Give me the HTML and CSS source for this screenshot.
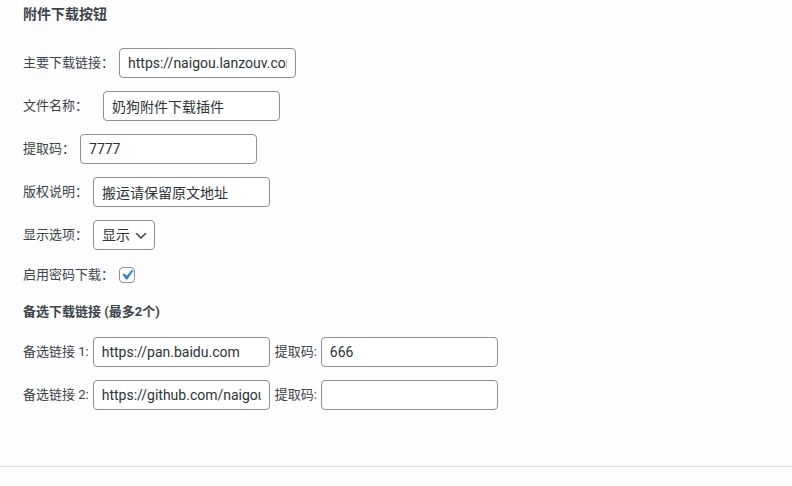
FILE: index.html
```html
<!DOCTYPE html>
<html lang="zh-CN">
<head>
<meta charset="utf-8">
<title>附件下载按钮</title>
<link rel="stylesheet" href="styles.css">
</head>
<body>
<div class="wrap">
  <h3 class="title">附件下载按钮</h3>
  <div class="form">
    <div class="row"><label>主要下载链接：</label><input class="text" type="text" value="https://naigou.lanzouv.com/"></div>
    <div class="row row-wide"><label>文件名称：</label><input class="text" type="text" value="奶狗附件下载插件"></div>
    <div class="row"><label>提取码：</label><input class="text" type="text" value="7777"></div>
    <div class="row"><label>版权说明：</label><input class="text" type="text" value="搬运请保留原文地址"></div>
    <div class="row"><label>显示选项：</label><select class="select"><option>显示</option><option>隐藏</option></select></div>
    <div class="row row-check"><label>启用密码下载：</label><input class="check" type="checkbox" checked></div>
    <h4 class="subtitle">备选下载链接 (最多2个)</h4>
    <div class="row row-alt"><label>备选链接 1:</label><input class="text" type="text" value="https://pan.baidu.com"><label class="code-label">提取码:</label><input class="text" type="text" value="666"></div>
    <div class="row row-alt"><label>备选链接 2:</label><input class="text" type="text" value="https://github.com/naigou"><label class="code-label">提取码:</label><input class="text" type="text" value=""></div>
  </div>
</div>
<div class="footer-line"></div>
</body>
</html>
```

FILE: styles.css
```css
html, body {
  margin: 0;
  padding: 0;
  background: #fdfdfd;
}
body {
  font-family: "Segoe UI", Roboto, "Noto Sans CJK SC", sans-serif;
  color: #3c434a;
  font-size: 13px;
}
.wrap {
  padding: 4px 0 0 23px;
}
.title {
  margin: 0 0 24px;
  font-size: 14px;
  line-height: 20px;
  font-weight: 700;
  color: #3c434a;
}
.form {
  display: flex;
  flex-direction: column;
  gap: 13px;
}
.row {
  display: flex;
  align-items: center;
  gap: 5px;
  height: 30px;
}
.row label {
  font-size: 13px;
  line-height: 20px;
  white-space: nowrap;
}
.row-wide {
  gap: 15px;
}
.row-alt {
  gap: 4px;
}
.row-check {
  height: 22px;
  padding-top: 1px;
}
.code-label {
  margin-left: 1px;
}
.text {
  box-sizing: border-box;
  width: 177px;
  height: 30px;
  margin: 0;
  padding: 0 8px;
  border: 1px solid #8c8f94;
  border-radius: 4px;
  background: #fff;
  color: #2c3338;
  font-family: "Segoe UI", Roboto, "Noto Sans CJK SC", sans-serif;
  font-size: 14px;
  outline: none;
}
.select {
  box-sizing: border-box;
  width: 62px;
  height: 30px;
  margin: 0;
  padding: 0 24px 0 8px;
  border: 1px solid #8c8f94;
  border-radius: 4px;
  color: #2c3338;
  font-family: "Segoe UI", Roboto, "Noto Sans CJK SC", sans-serif;
  font-size: 14px;
  -webkit-appearance: none;
  appearance: none;
  background: #fff url("data:image/svg+xml;charset=US-ASCII,%3Csvg%20width%3D%2220%22%20height%3D%2220%22%20xmlns%3D%22http%3A%2F%2Fwww.w3.org%2F2000%2Fsvg%22%3E%3Cpath%20d%3D%22M5%206l5%205%205-5%202%201-7%207-7-7%202-1z%22%20fill%3D%22%23555%22%2F%3E%3C%2Fsvg%3E") no-repeat right 5px top 55%;
  background-size: 16px 16px;
  outline: none;
}
.check {
  box-sizing: border-box;
  width: 16px;
  height: 16px;
  margin: 0;
  border: 1px solid #8c8f94;
  border-radius: 4px;
  background: #fff;
  -webkit-appearance: none;
  appearance: none;
}
.check:checked {
  background: #fff url("data:image/svg+xml;charset=US-ASCII,%3Csvg%20xmlns%3D%22http%3A%2F%2Fwww.w3.org%2F2000%2Fsvg%22%20viewBox%3D%220%200%2020%2020%22%3E%3Cpath%20d%3D%22M14.83%204.89l1.34.94-5.81%208.38H9.02L5.78%209.67l1.34-1.25%202.57%202.4z%22%20fill%3D%22%233582c4%22%2F%3E%3C%2Fsvg%3E") no-repeat center;
  background-size: 21px 21px;
}
.subtitle {
  margin: 3px 0 2px;
  font-size: 13px;
  line-height: 20px;
  font-weight: 700;
  color: #3c434a;
}
.footer-line {
  margin-top: 56px;
  border-top: 1px solid #dcdcde;
  height: 20px;
}
```
